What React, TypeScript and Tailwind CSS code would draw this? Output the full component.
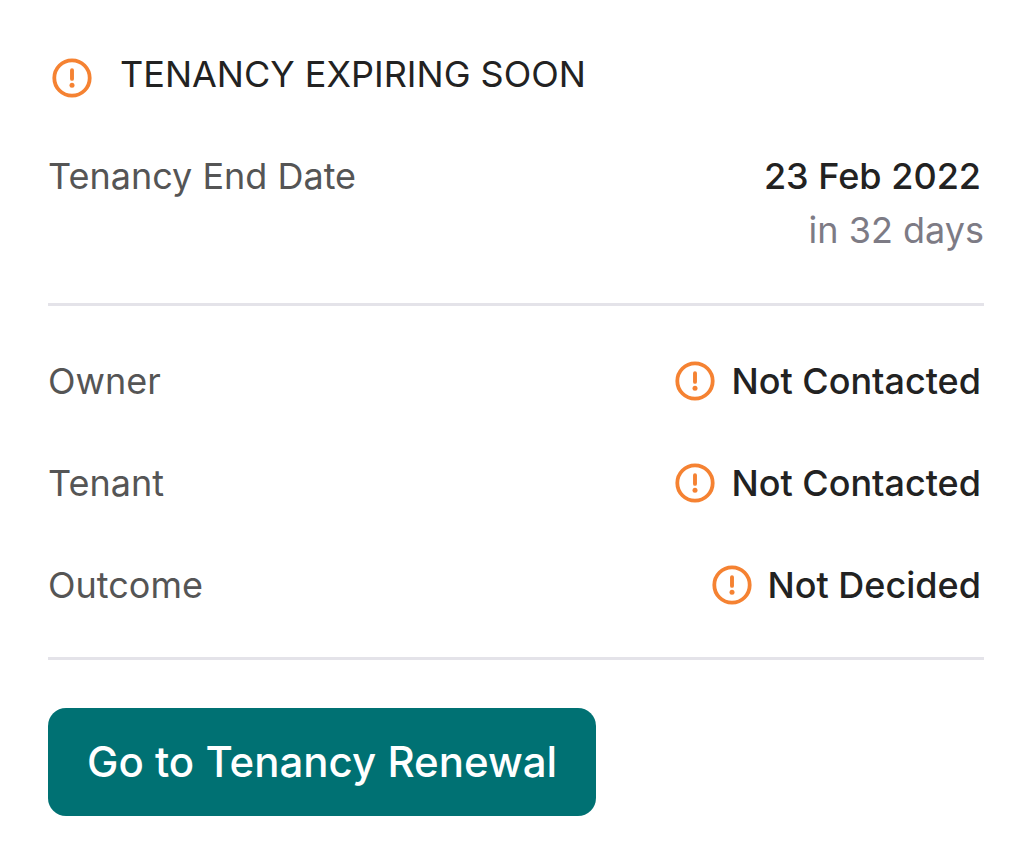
import React from "react";

interface IStatusRow {
    label: string;
    status: string;
}

const rows: IStatusRow[] = [
    { label: "Owner", status: "Not Contacted" },
    { label: "Tenant", status: "Not Contacted" },
    { label: "Outcome", status: "Not Decided" },
];

const AlertIcon: React.FC = () => (
    <svg className="h-[46px] w-10 shrink-0" viewBox="0 0 40 40" fill="none" stroke="#f58232" strokeLinecap="round" aria-hidden="true">
        <circle cx="20" cy="20" r="17.7" strokeWidth="3.8" />
        <path d="M20 12.3v8.6" strokeWidth="3.9" />
        <circle cx="20" cy="27.2" r="2.5" fill="#f58232" stroke="none" />
    </svg>
);

const App: React.FC = () => {
    return (
        <main className="min-h-screen bg-white px-12 pt-[47px] pb-12 font-['Inter',sans-serif] text-4xl text-[#222222]">
            <header className="flex items-end gap-7 pl-1">
                <AlertIcon />
                <h1 className="leading-[54px]">TENANCY EXPIRING SOON</h1>
            </header>

            <dl className="mt-12 flex justify-between border-b-3 border-[#e4e3e9] pb-[46px] leading-[54px]">
                <dt className="text-[#555555]">Tenancy End Date</dt>
                <dd className="text-right">
                    <p className="pr-[3px] font-medium">23 Feb 2022</p>
                    <p className="text-[#7d7b85]">in 32 days</p>
                </dd>
            </dl>

            <dl className="flex flex-col gap-12 border-b-3 border-[#e4e3e9] pt-12 pb-[45px] leading-[54px]">
                {rows.map((row) => (
                    <div className="flex justify-between" key={row.label}>
                        <dt className="text-[#555555]">{row.label}</dt>
                        <dd className="flex items-center gap-4 pr-[3px] font-medium">
                            <AlertIcon />
                            {row.status}
                        </dd>
                    </div>
                ))}
            </dl>

            <button type="button" className="mt-12 cursor-pointer rounded-[18px] bg-[#007173] px-[39px] py-6 text-[42px] leading-[60px] font-medium text-white">
                Go to Tenancy Renewal
            </button>
        </main>
    );
};

export default App;
